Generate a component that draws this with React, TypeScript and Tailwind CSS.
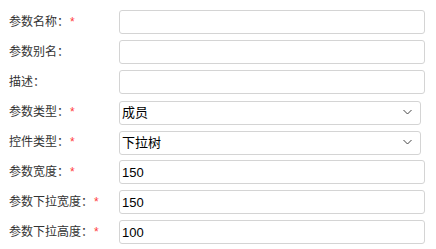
import React from "react";

const font = { fontFamily: '"Liberation Sans", "Noto Sans CJK SC", sans-serif' };

type Row = {
  label: string;
  required?: boolean;
  value?: string;
  select?: boolean;
};

const rows: Row[] = [
  { label: "参数名称：", required: true },
  { label: "参数别名：" },
  { label: "描述：" },
  { label: "参数类型：", required: true, value: "成员", select: true },
  { label: "控件类型：", required: true, value: "下拉树", select: true },
  { label: "参数宽度：", required: true, value: "150" },
  { label: "参数下拉宽度：", required: true, value: "150" },
  { label: "参数下拉高度：", required: true, value: "100" },
];

function Chevron() {
  return (
    <svg
      width="9"
      height="5"
      viewBox="0 0 9 5"
      className="pointer-events-none absolute right-[9px] top-1/2 -translate-y-1/2"
    >
      <path d="M0.5 0.5 L4.5 4.5 L8.5 0.5" fill="none" stroke="#444" strokeWidth="1" />
    </svg>
  );
}

export default function App() {
  return (
    <div className="bg-white w-[436px] h-[249px] pt-[10px] flex flex-col gap-[6px]" style={font}>
      {rows.map((r) => (
        <div key={r.label} className="flex items-center h-[24px]">
          <label className="w-[119px] pl-[9px] text-[12px] text-[#333] whitespace-nowrap">
            {r.label}
            {r.required && <span className="text-[#ff3b3b] ml-[1px]">*</span>}
          </label>
          {r.select ? (
            <div className="relative w-[302px] h-[24px]">
              <select
                defaultValue={r.value}
                className="appearance-none w-full h-full border border-[#d4d4d4] rounded-[3px] pl-[2px] text-[13px] text-black bg-white outline-none"
              >
                <option value={r.value}>{r.value}</option>
              </select>
              <Chevron />
            </div>
          ) : (
            <input
              type="text"
              defaultValue={r.value ?? ""}
              className="w-[306px] h-[24px] border border-[#d4d4d4] rounded-[3px] px-[2px] text-[13px] text-black bg-white outline-none"
            />
          )}
        </div>
      ))}
    </div>
  );
}
